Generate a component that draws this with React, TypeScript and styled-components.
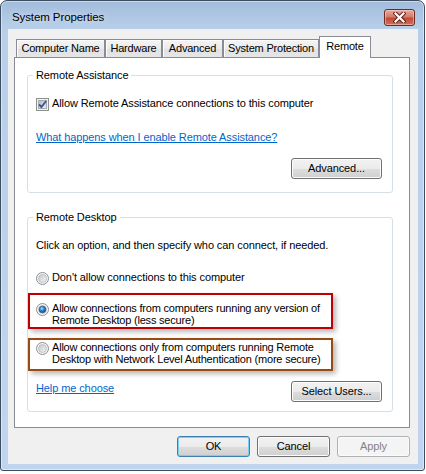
import React from 'react';
import styled, { createGlobalStyle } from 'styled-components';

const GlobalStyle = createGlobalStyle`
  html, body {
    margin: 0;
    padding: 0;
    background: #fff;
  }
  body {
    font-family: "Liberation Sans", Arial, sans-serif;
    font-size: 11px;
    letter-spacing: -0.1px;
    color: #000;
  }
`;

const Window = styled.div`
  box-sizing: border-box;
  width: 425px;
  height: 471px;
  display: flex;
  flex-direction: column;
  border: 1px solid #3d4c5e;
  border-radius: 7px 7px 3px 3px;
  background: linear-gradient(180deg, #a2bcdc 0%, #b8cfe9 28px, #c0d5ed 100%);
  box-shadow: inset 0 0 0 1px rgba(255, 255, 255, 0.45);
  padding: 0 6px 6px 7px;
`;

const TitleBar = styled.div`
  height: 28px;
  flex-shrink: 0;
  display: flex;
  align-items: flex-start;
  padding: 9px 3px 0 4px;
  box-sizing: border-box;
`;

const Title = styled.div`
  font-size: 11.5px;
  line-height: 15px;
  color: #000;
  text-shadow: 0 0 6px rgba(255, 255, 255, 0.8);
`;

const CloseButton = styled.div`
  margin-left: auto;
  margin-top: -1px;
  width: 31px;
  height: 17px;
  box-sizing: border-box;
  border: 1px solid #6b2a22;
  border-radius: 3px;
  background: linear-gradient(180deg, #e8a99c 0%, #d67b6b 45%, #c24a36 55%, #d0705c 100%);
  box-shadow: inset 0 0 0 1px rgba(255, 220, 210, 0.5);
  display: flex;
  align-items: center;
  justify-content: center;
`;

const Client = styled.div`
  flex: 1;
  display: flex;
  flex-direction: column;
  background: #f0f0f0;
  padding: 7px 8px 7px 6px;
`;

const TabStrip = styled.div`
  position: relative;
  z-index: 1;
  display: flex;
  align-items: flex-end;
  height: 22px;
  margin-bottom: -1px;
  padding-left: 2px;
`;

const Tab = styled.div<{ $width: number; $active?: boolean }>`
  box-sizing: border-box;
  width: ${(p) => p.$width}px;
  height: ${(p) => (p.$active ? 22 : 18)}px;
  margin-bottom: ${(p) => (p.$active ? 0 : 1)}px;
  border: 1px solid #898c95;
  border-bottom-width: 0;
  background: ${(p) =>
    p.$active ? '#fff' : 'linear-gradient(180deg, #f4f4f4 0%, #ebebeb 50%, #e1e1e1 51%, #e6e6e6 100%)'};
  box-shadow: ${(p) => (p.$active ? 'none' : 'inset 1px 1px 0 #fcfcfc')};
  display: flex;
  align-items: center;
  justify-content: center;
  padding-bottom: ${(p) => (p.$active ? 2 : 0)}px;
  line-height: 13px;
  letter-spacing: -0.2px;
  white-space: nowrap;
`;

const Panel = styled.div`
  flex: 1;
  display: flex;
  flex-direction: column;
  background: #fff;
  border: 1px solid #898c95;
  padding: 17px 16px 0 12px;
`;

const GroupBox = styled.div<{ $pad: string; $top?: number }>`
  position: relative;
  display: flex;
  flex-direction: column;
  border: 1px solid #d5dfe5;
  border-radius: 3px;
  padding: ${(p) => p.$pad};
  margin-top: ${(p) => p.$top ?? 0}px;
`;

const Caption = styled.span`
  position: absolute;
  top: -8px;
  left: 5px;
  padding: 0 3px;
  background: #fff;
  line-height: 15px;
`;

const CheckRow = styled.div`
  display: flex;
  align-items: flex-start;
  gap: 3px;
  line-height: 13px;
  white-space: nowrap;
  & > svg {
    flex-shrink: 0;
    margin-top: 1px;
  }
`;

const Option = styled.div<{ $top?: number; $lh?: number; $tight?: boolean }>`
  display: flex;
  align-items: flex-start;
  gap: 3px;
  line-height: ${(p) => p.$lh ?? 13}px;
  letter-spacing: ${(p) => (p.$tight ? -0.2 : -0.1)}px;
  margin-top: ${(p) => p.$top ?? 0}px;
  white-space: nowrap;
  & > svg {
    flex-shrink: 0;
    margin-top: 1px;
  }
`;

const Note = styled.div<{ $top?: number }>`
  line-height: 15px;
  white-space: nowrap;
  margin-top: ${(p) => p.$top ?? 0}px;
`;

const Link = styled.a<{ $top?: number }>`
  align-self: flex-start;
  color: #0066cc;
  text-decoration: underline;
  line-height: 15px;
  white-space: nowrap;
  margin-top: ${(p) => p.$top ?? 0}px;
  cursor: pointer;
`;

const Callout = styled.div<{ $color: string; $top: number; $pad: string }>`
  box-sizing: border-box;
  width: 305px;
  margin-left: -8px;
  margin-top: ${(p) => p.$top}px;
  border: 2px solid ${(p) => p.$color};
  padding: ${(p) => p.$pad};
  box-shadow: 3px 3px 5px rgba(0, 0, 0, 0.28);
`;

const ActionRow = styled.div<{ $top: number }>`
  display: flex;
  align-items: center;
  justify-content: space-between;
  margin-top: ${(p) => p.$top}px;
`;

const PushButton = styled.button<{ $width: number; $default?: boolean }>`
  box-sizing: border-box;
  width: ${(p) => p.$width}px;
  height: 21px;
  margin-left: auto;
  padding: 0;
  font: inherit;
  letter-spacing: inherit;
  line-height: 13px;
  color: #000;
  border: 1px solid ${(p) => (p.$default ? '#3c7fb1' : '#707070')};
  border-radius: 3px;
  background: linear-gradient(180deg, #f2f2f2 0%, #ebebeb 50%, #dddddd 51%, #cfcfcf 100%);
  box-shadow: inset 0 0 0 1px ${(p) => (p.$default ? '#7ecdf4' : '#fcfcfc')};
  &:disabled {
    color: #838383;
    border-color: #adb2b5;
    background: #f4f4f4;
    box-shadow: inset 0 0 0 1px #fbfbfb;
  }
`;

const Footer = styled.div`
  display: flex;
  justify-content: flex-end;
  gap: 7px;
  margin-top: 8px;
  & > button {
    margin-left: 0;
  }
`;

const CloseGlyph = () => (
  <svg width="13" height="11" viewBox="0 0 13 11">
    <path d="M2.5 1.5 L10.5 9.5 M10.5 1.5 L2.5 9.5" stroke="#5a1a12" strokeWidth="4" strokeLinecap="square" />
    <path d="M2.5 1.5 L10.5 9.5 M10.5 1.5 L2.5 9.5" stroke="#fff" strokeWidth="2.2" strokeLinecap="square" />
  </svg>
);

const CheckBox = () => (
  <svg width="13" height="13" viewBox="0 0 13 13">
    <defs>
      <linearGradient id="cbIn" x1="0" y1="0" x2="1" y2="1">
        <stop offset="0" stopColor="#b3b8be" />
        <stop offset="1" stopColor="#eeeff0" />
      </linearGradient>
    </defs>
    <rect x="0.5" y="0.5" width="12" height="12" fill="#f4f4f4" stroke="#8e8f8f" />
    <rect x="2.5" y="2.5" width="8" height="8" fill="url(#cbIn)" stroke="#a9adb2" />
    <path d="M3 6.3 L5.4 9 L10.2 3" fill="none" stroke="#3d5597" strokeWidth="1.9" />
  </svg>
);

const Radio = ({ checked }: { checked?: boolean }) => (
  <svg width="13" height="13" viewBox="0 0 13 13">
    <defs>
      <linearGradient id="rdIn" x1="0" y1="0" x2="1" y2="1">
        <stop offset="0" stopColor="#c4c8cd" />
        <stop offset="1" stopColor="#f4f4f4" />
      </linearGradient>
      <radialGradient id="rdDot" cx="0.4" cy="0.35" r="0.7">
        <stop offset="0" stopColor="#a8e2fb" />
        <stop offset="0.45" stopColor="#2f8ad4" />
        <stop offset="1" stopColor="#12467f" />
      </radialGradient>
    </defs>
    <circle cx="6.5" cy="6.5" r="6" fill="#f6f6f6" stroke="#8e8f8f" />
    <circle cx="6.5" cy="6.5" r="4" fill="url(#rdIn)" stroke="#b4b8bd" strokeWidth="0.8" />
    {checked && <circle cx="6.5" cy="6.5" r="3.3" fill="url(#rdDot)" stroke="#1b4b7c" strokeWidth="0.6" />}
  </svg>
);

const tabs = [
  { label: 'Computer Name', width: 89 },
  { label: 'Hardware', width: 57 },
  { label: 'Advanced', width: 61 },
  { label: 'System Protection', width: 96 },
  { label: 'Remote', width: 52 },
];

export default function App() {
  return (
    <>
      <GlobalStyle />
      <Window>
        <TitleBar>
          <Title>System Properties</Title>
          <CloseButton aria-label="Close">
            <CloseGlyph />
          </CloseButton>
        </TitleBar>
        <Client>
          <TabStrip>
            {tabs.map((t) => (
              <Tab key={t.label} $width={t.width} $active={t.label === 'Remote'}>
                {t.label}
              </Tab>
            ))}
          </TabStrip>
          <Panel>
            <GroupBox $pad="21px 10px 13px 8px">
              <Caption>Remote Assistance</Caption>
              <CheckRow>
                <CheckBox />
                <span>Allow Remote Assistance connections to this computer</span>
              </CheckRow>
              <Link $top={19}>What happens when I enable Remote Assistance?</Link>
              <ActionRow $top={13}>
                <PushButton $width={91}>Advanced...</PushButton>
              </ActionRow>
            </GroupBox>

            <GroupBox $pad="20px 10px 9px 8px" $top={24}>
              <Caption>Remote Desktop</Caption>
              <Note>Click an option, and then specify who can connect, if needed.</Note>
              <Option $top={18}>
                <Radio />
                <span>Don't allow connections to this computer</span>
              </Option>
              <Callout $color="#c00000" $top={8} $pad="7px 6px 1px">
                <Option $lh={12} $tight>
                  <Radio checked />
                  <span>
                    Allow connections from computers running any version of
                    <br />
                    Remote Desktop (less secure)
                  </span>
                </Option>
              </Callout>
              <Callout $color="#984a12" $top={9} $pad="1px 6px 4px">
                <Option $lh={12} $tight>
                  <Radio />
                  <span>
                    Allow connections only from computers running Remote
                    <br />
                    Desktop with Network Level Authentication (more secure)
                  </span>
                </Option>
              </Callout>
              <ActionRow $top={10}>
                <Link>Help me choose</Link>
                <PushButton $width={91}>Select Users...</PushButton>
              </ActionRow>
            </GroupBox>
          </Panel>
          <Footer>
            <PushButton $width={73} $default>
              OK
            </PushButton>
            <PushButton $width={73}>Cancel</PushButton>
            <PushButton $width={73} disabled>
              Apply
            </PushButton>
          </Footer>
        </Client>
      </Window>
    </>
  );
}
